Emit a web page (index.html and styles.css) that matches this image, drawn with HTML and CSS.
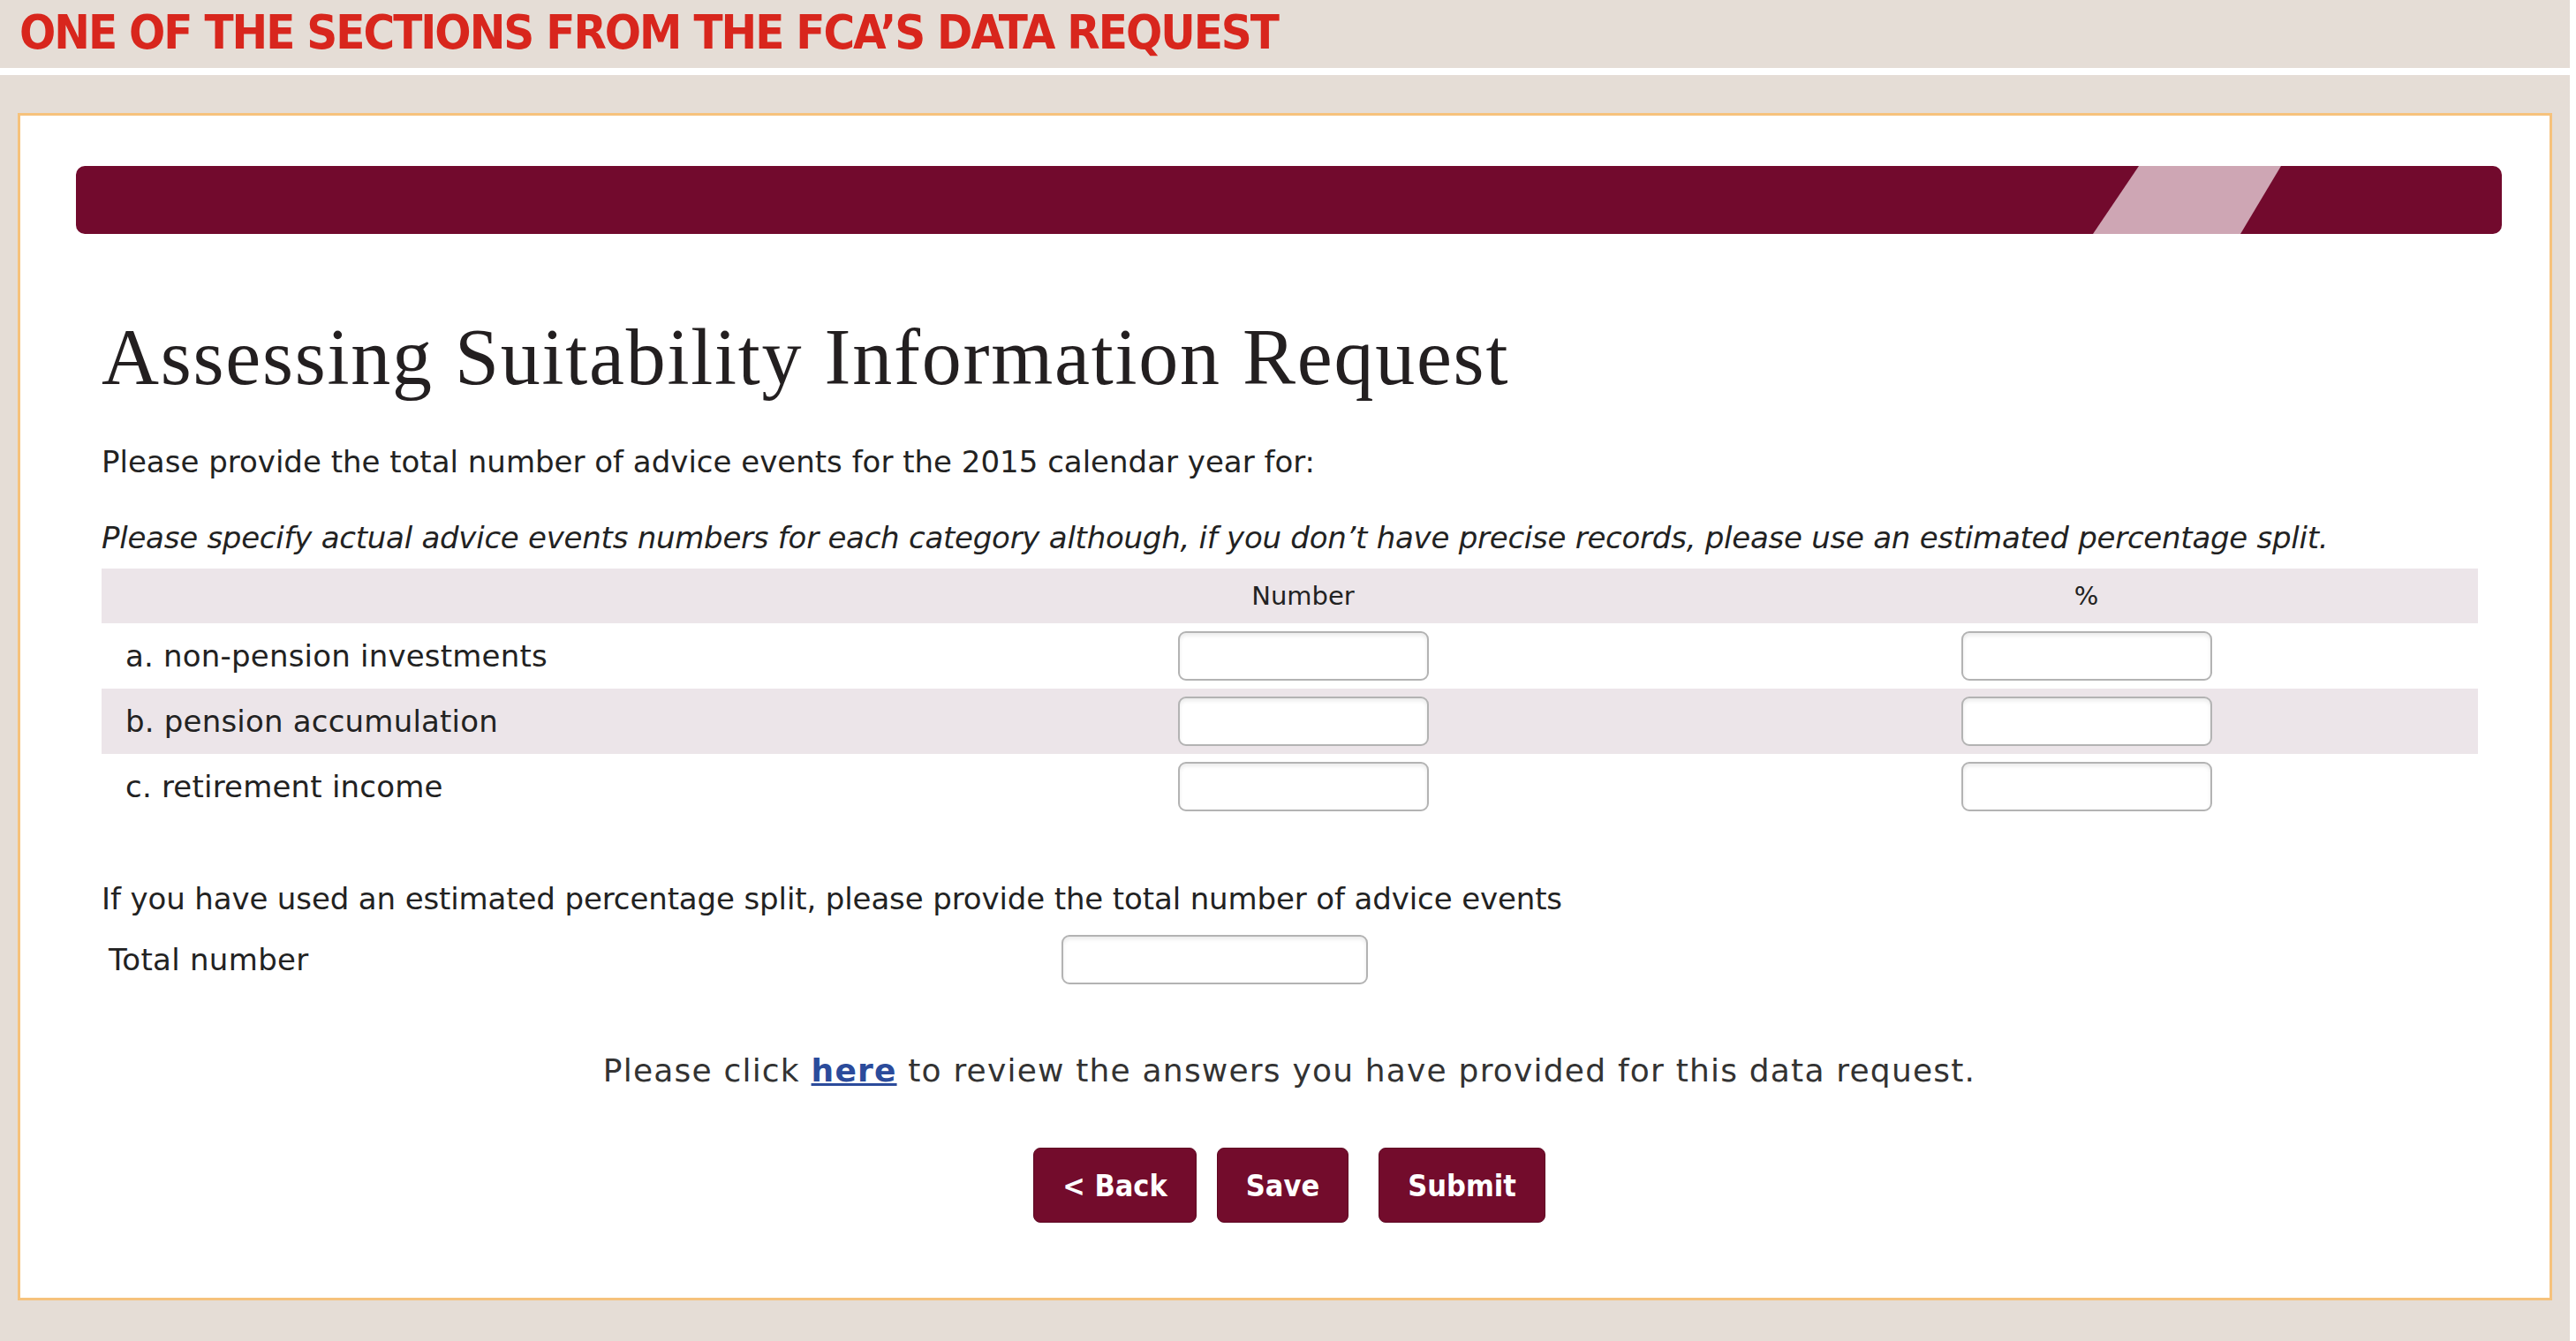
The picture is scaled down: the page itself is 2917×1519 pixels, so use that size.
FILE: index.html
```html
<!DOCTYPE html>
<html lang="en">
<head>
  <meta charset="UTF-8">
  <title>Assessing Suitability Information Request</title>
  <link rel="stylesheet" href="styles.css">
</head>
<body>
  <div class="page">
    <div class="banner">
      <span class="banner-title">ONE OF THE SECTIONS FROM THE FCA’S DATA REQUEST</span>
    </div>
    <div class="divider"></div>

    <div class="card">
      <svg class="bar" width="2747" height="77" viewBox="0 0 2747 77">
        <rect x="0" y="0" width="2747" height="77" rx="10" fill="#720a2d"/>
        <polygon points="2336,0 2497,0 2451,77 2284,77" fill="#cea6b4"/>
      </svg>

      <div class="content">
        <h1>Assessing Suitability Information Request</h1>
        <p class="intro">Please provide the total number of advice events for the 2015 calendar year for:</p>
        <p class="note">Please specify actual advice events numbers for each category although, if you don’t have precise records, please use an estimated percentage split.</p>

        <table class="events">
          <colgroup>
            <col class="col-label">
            <col class="col-field">
            <col class="col-field">
          </colgroup>
          <thead>
            <tr>
              <th></th>
              <th>Number</th>
              <th>%</th>
            </tr>
          </thead>
          <tbody>
            <tr>
              <td class="row-label">a. non-pension investments</td>
              <td><input type="text" class="field"></td>
              <td><input type="text" class="field"></td>
            </tr>
            <tr class="shaded">
              <td class="row-label">b. pension accumulation</td>
              <td><input type="text" class="field"></td>
              <td><input type="text" class="field"></td>
            </tr>
            <tr>
              <td class="row-label">c. retirement income</td>
              <td><input type="text" class="field"></td>
              <td><input type="text" class="field"></td>
            </tr>
          </tbody>
        </table>

        <p class="split">If you have used an estimated percentage split, please provide the total number of advice events</p>
        <div class="total-row">
          <label class="total-label" for="total">Total number</label>
          <input type="text" id="total" class="field total-field">
        </div>

        <p class="review">Please click <a href="#">here</a> to review the answers you have provided for this data request.</p>

        <div class="actions">
          <button class="btn">&lt; Back</button>
          <button class="btn">Save</button>
          <button class="btn btn-submit">Submit</button>
        </div>
      </div>
    </div>
  </div>
</body>
</html>
```

FILE: styles.css
```css
body {
  margin: 0;
  background: #ffffff;
  color: #222;
  font-family: "DejaVu Sans", sans-serif;
}
.page {
  width: 2910px;
  height: 1519px;
  background: #e5ddd6;
  overflow: hidden;
}
.banner {
  height: 77px;
  padding-left: 22px;
  box-sizing: border-box;
}
.banner-title {
  display: inline-block;
  padding-top: 10px;
  font-family: "Liberation Sans Narrow", "DejaVu Sans Condensed", sans-serif;
  font-weight: bold;
  font-size: 54px;
  line-height: 54px;
  letter-spacing: -2px;
  color: #d8261d;
}
.divider {
  height: 8px;
  background: #ffffff;
}
.card {
  margin: 43px 0 0 20px;
  width: 2870px;
  height: 1345px;
  box-sizing: border-box;
  background: #ffffff;
  border: 3px solid #f6c27c;
  padding-top: 57px;
}
.bar {
  display: block;
  margin-left: 63px;
}
.content {
  padding: 0 82px 0 92px;
}
h1 {
  margin: 86px 0 0;
  font-family: "Liberation Serif", serif;
  font-weight: normal;
  font-size: 90px;
  line-height: 108px;
  letter-spacing: 1.75px;
  color: #231f20;
}
.intro, .note, .split {
  font-size: 34px;
  line-height: 40px;
}
.intro {
  margin: 44px 0 0;
}
.note {
  margin: 46px 0 0;
  font-style: italic;
  letter-spacing: -0.25px;
}
.events {
  margin-top: 15px;
  width: 2691px;
  border-collapse: collapse;
  table-layout: fixed;
}
.col-label {
  width: 917px;
}
.col-field {
  width: 887px;
}
.events thead tr {
  background: #ece5e9;
  height: 62px;
}
.events th {
  font-weight: normal;
  font-size: 29px;
  padding: 0;
}
.events tbody tr {
  height: 74px;
}
.events td {
  padding: 0;
  text-align: center;
  vertical-align: middle;
}
.events tr.shaded {
  background: #ece5e9;
}
.events td.row-label {
  text-align: left;
  padding-left: 27px;
  font-size: 34px;
  letter-spacing: 0.2px;
}
.field {
  width: 284px;
  height: 56px;
  box-sizing: border-box;
  border: 2px solid #b3b3b3;
  border-radius: 9px;
  background: #ffffff;
  box-shadow: inset 0 3px 4px rgba(0, 0, 0, 0.08);
  vertical-align: middle;
}
.split {
  margin: 70px 0 0;
  letter-spacing: -0.12px;
}
.total-row {
  display: flex;
  align-items: center;
  margin-top: 21px;
  padding-left: 8px;
}
.total-label {
  width: 1079px;
  font-size: 34px;
  letter-spacing: 0.3px;
}
.total-field {
  width: 347px;
}
.review {
  margin: 76px 0 0;
  text-align: center;
  font-size: 36px;
  line-height: 44px;
  letter-spacing: 1.2px;
  color: #333;
}
.review a {
  color: #2b4b9b;
  font-weight: bold;
}
.actions {
  display: flex;
  justify-content: center;
  gap: 23px;
  margin-top: 65px;
}
.btn {
  height: 85px;
  padding: 0 32px;
  background: #730c2c;
  color: #ffffff;
  border: 1px solid #5e0822;
  border-radius: 8px;
  font-family: "DejaVu Sans Condensed", "DejaVu Sans", sans-serif;
  font-weight: bold;
  font-size: 34px;
  cursor: pointer;
}
.btn-submit {
  margin-left: 11px;
}
```
